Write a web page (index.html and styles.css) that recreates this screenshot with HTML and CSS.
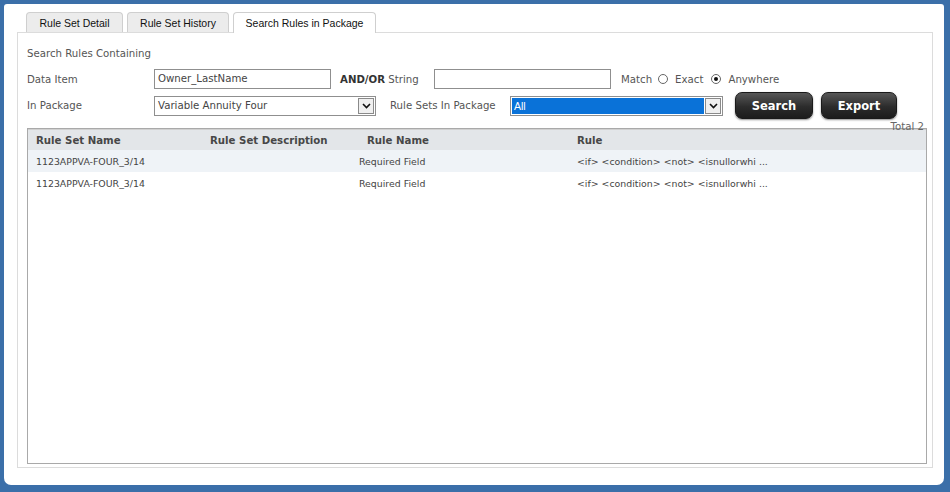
FILE: index.html
```html
<!DOCTYPE html>
<html>
<head>
<meta charset="utf-8">
<link rel="stylesheet" href="styles.css">
</head>
<body>
<div class="window">
  <div class="tabs">
    <div class="tab t1">Rule Set Detail</div>
    <div class="tab t2">Rule Set History</div>
    <div class="tab t3 active">Search Rules in Package</div>
  </div>
  <div class="panel">
    <div class="title">Search Rules Containing</div>
    <div class="row row1">
      <div class="label">Data Item</div>
      <div class="input in1">Owner_LastName</div>
      <div class="andor"><b>AND/OR</b> String</div>
      <div class="input in2"></div>
      <div class="match">Match</div>
      <span class="radio"></span><span class="rlabel">Exact</span>
      <span class="radio checked"></span><span class="rlabel">Anywhere</span>
    </div>
    <div class="row row2">
      <div class="label">In Package</div>
      <div class="select sel1">
        <span class="seltext">Variable Annuity Four</span>
        <span class="arrow"><svg width="9" height="6" viewBox="0 0 9 6"><path d="M1 1 L4.5 4.5 L8 1" fill="none" stroke="#111" stroke-width="1.6"/></svg></span>
      </div>
      <div class="label2">Rule Sets In Package</div>
      <div class="select sel2">
        <span class="seltext hl">All</span>
        <span class="arrow"><svg width="9" height="6" viewBox="0 0 9 6"><path d="M1 1 L4.5 4.5 L8 1" fill="none" stroke="#111" stroke-width="1.6"/></svg></span>
      </div>
      <div class="btn search">Search</div>
      <div class="btn export">Export</div>
    </div>
    <div class="total">Total 2</div>
    <div class="table">
      <div class="tr head">
        <div class="c c1">Rule Set Name</div>
        <div class="c c2">Rule Set Description</div>
        <div class="c c3">Rule Name</div>
        <div class="c c4">Rule</div>
      </div>
      <div class="tr odd">
        <div class="c c1">1123APPVA-FOUR_3/14</div>
        <div class="c c2"></div>
        <div class="c c3">Required Field</div>
        <div class="c c4">&lt;if&gt; &lt;condition&gt; &lt;not&gt; &lt;isnullorwhi ...</div>
      </div>
      <div class="tr">
        <div class="c c1">1123APPVA-FOUR_3/14</div>
        <div class="c c2"></div>
        <div class="c c3">Required Field</div>
        <div class="c c4">&lt;if&gt; &lt;condition&gt; &lt;not&gt; &lt;isnullorwhi ...</div>
      </div>
    </div>
  </div>
</div>
</body>
</html>
```
FILE: styles.css
```css
* { box-sizing: border-box; }
html, body { margin: 0; padding: 0; }
body {
  width: 950px;
  height: 492px;
  background: #3b6fa9;
  padding: 4px 6px 7px 4px;
  font-family: "DejaVu Sans", Verdana, sans-serif;
  font-size: 10.2px;
  color: #444;
  overflow: hidden;
}
.window {
  background: #fff;
  height: 100%;
  border-radius: 3px 3px 7px 7px;
  padding: 8px 11px 0 13px;
}
.tabs {
  display: flex;
  gap: 4px;
  margin-left: 9px;
  height: 20px;
  position: relative;
  z-index: 1;
}
.tab {
  height: 20px;
  border: 1px solid #cfcfcf;
  border-bottom: none;
  border-radius: 4px 4px 0 0;
  background: #ececec;
  font-family: "Liberation Sans", Arial, sans-serif;
  font-size: 10.5px;
  color: #111;
  display: flex;
  align-items: center;
  justify-content: center;
}
.t1 { width: 97px; }
.t2 { width: 102px; }
.t3 { width: 143px; }
.tab.active { background: #fff; height: 21px; }
.panel {
  border: 1px solid #dcdcdc;
  height: 436px;
  padding: 0 5px 0 9px;
}
.title {
  margin-top: 13px;
  height: 16px;
  line-height: 16px;
  color: #555;
}
.row {
  display: flex;
  align-items: center;
}
.row1 { margin-top: 7px; height: 20px; }
.row2 { margin-top: 3px; height: 27px; }
.label { width: 127px; color: #555; }
.input {
  height: 20px;
  border: 1px solid #8f8f8f;
  padding-left: 3px;
  line-height: 18px;
  color: #444;
}
.in1 { width: 177px; }
.andor { width: 94px; margin-left: 9px; color: #555; }
.andor b { color: #333; }
.in2 { width: 177px; }
.match { margin-left: 10px; margin-right: 6px; color: #555; }
.radio {
  width: 10px; height: 10px;
  border: 1px solid #666;
  border-radius: 50%;
  display: inline-flex;
  align-items: center;
  justify-content: center;
  margin-right: 7px;
  background: #fff;
}
.radio.checked::after {
  content: "";
  width: 4px; height: 4px;
  border-radius: 50%;
  background: #111;
}
.rlabel { margin-right: 8px; color: #555; }
.select {
  height: 20px;
  border: 1px solid #8f8f8f;
  display: flex;
  align-items: stretch;
  padding: 1px;
}
.sel1 { width: 222px; }
.sel2 { width: 213px; }
.seltext {
  flex: 1;
  padding-left: 2px;
  line-height: 16px;
  color: #444;
}
.seltext.hl {
  background: #0a72d8;
  color: #fff;
  font-family: "Liberation Sans", Arial, sans-serif;
  font-size: 10.5px;
  margin-right: 1px;
}
.arrow {
  width: 16px;
  border: 1px solid #8a8a8a;
  background: #f0f0f0;
  display: flex;
  align-items: center;
  justify-content: center;
}
.label2 { margin-left: 14px; width: 120px; color: #555; }
.btn {
  height: 27px;
  border-radius: 7px;
  background: linear-gradient(#575757, #2c2c2c 55%, #1c1c1c);
  border: 1px solid #1a1a1a;
  box-shadow: 0 1px 2px rgba(0,0,0,0.45);
  color: #fff;
  font-weight: bold;
  font-size: 11.5px;
  display: flex;
  align-items: center;
  justify-content: center;
}
.search { width: 78px; margin-left: 12px; }
.export { width: 76px; margin-left: 8px; }
.total {
  margin-top: 2px;
  height: 12px;
  line-height: 12px;
  text-align: right;
  padding-right: 3px;
  color: #666;
  margin-bottom: -5px;
  position: relative;
  z-index: 1;
}
.table {
  width: 900px;
  height: 336px;
  border: 1px solid #a9a9a9;
}
.tr {
  display: grid;
  grid-template-columns: 174px 157px 210px 1fr;
  height: 22px;
  align-items: center;
  font-size: 9.4px;
  color: #444;
}
.tr.head {
  height: 21px;
  background: #e3e6e9;
  font-size: 10.2px;
  font-weight: bold;
  color: #474747;
  border-top: 1px solid #d0d0d0;
}
.tr.odd { background: #eff3f7; }
.c { padding-left: 8px; white-space: nowrap; }
.tr .c3 { padding-left: 0; }
.tr.head .c3 { padding-left: 8px; }
```
